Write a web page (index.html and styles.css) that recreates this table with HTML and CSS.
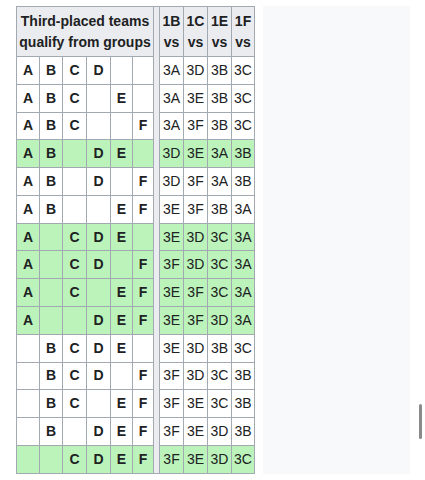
FILE: index.html
```html
<!DOCTYPE html>
<html>
<head>
<meta charset="utf-8">
<link rel="stylesheet" href="styles.css">
</head>
<body>
<div class="page">
  <table class="wikitable">
    <colgroup>
      <col class="c-l1"><col class="c-l2"><col class="c-l3"><col class="c-l4"><col class="c-l5"><col class="c-l6">
      <col class="c-sep">
      <col class="c-r1"><col class="c-r2"><col class="c-r3"><col class="c-r4">
    </colgroup>
    <tbody>
      <tr class="head">
        <th colspan="6" class="head-groups">Third-placed teams qualify from groups</th>
        <th rowspan="16" class="sep"></th>
        <th class="head-vs">1B<br>vs</th>
        <th class="head-vs">1C<br>vs</th>
        <th class="head-vs">1E<br>vs</th>
        <th class="head-vs">1F<br>vs</th>
      </tr>
      <tr><td class="g">A</td><td class="g">B</td><td class="g">C</td><td class="g">D</td><td class="g"></td><td class="g"></td><td>3A</td><td>3D</td><td>3B</td><td>3C</td></tr>
      <tr><td class="g">A</td><td class="g">B</td><td class="g">C</td><td class="g"></td><td class="g">E</td><td class="g"></td><td>3A</td><td>3E</td><td>3B</td><td>3C</td></tr>
      <tr><td class="g">A</td><td class="g">B</td><td class="g">C</td><td class="g"></td><td class="g"></td><td class="g">F</td><td>3A</td><td>3F</td><td>3B</td><td>3C</td></tr>
      <tr class="q"><td class="g">A</td><td class="g">B</td><td class="g"></td><td class="g">D</td><td class="g">E</td><td class="g"></td><td>3D</td><td>3E</td><td>3A</td><td>3B</td></tr>
      <tr><td class="g">A</td><td class="g">B</td><td class="g"></td><td class="g">D</td><td class="g"></td><td class="g">F</td><td>3D</td><td>3F</td><td>3A</td><td>3B</td></tr>
      <tr><td class="g">A</td><td class="g">B</td><td class="g"></td><td class="g"></td><td class="g">E</td><td class="g">F</td><td>3E</td><td>3F</td><td>3B</td><td>3A</td></tr>
      <tr class="q"><td class="g">A</td><td class="g"></td><td class="g">C</td><td class="g">D</td><td class="g">E</td><td class="g"></td><td>3E</td><td>3D</td><td>3C</td><td>3A</td></tr>
      <tr class="q"><td class="g">A</td><td class="g"></td><td class="g">C</td><td class="g">D</td><td class="g"></td><td class="g">F</td><td>3F</td><td>3D</td><td>3C</td><td>3A</td></tr>
      <tr class="q"><td class="g">A</td><td class="g"></td><td class="g">C</td><td class="g"></td><td class="g">E</td><td class="g">F</td><td>3E</td><td>3F</td><td>3C</td><td>3A</td></tr>
      <tr class="q"><td class="g">A</td><td class="g"></td><td class="g"></td><td class="g">D</td><td class="g">E</td><td class="g">F</td><td>3E</td><td>3F</td><td>3D</td><td>3A</td></tr>
      <tr><td class="g"></td><td class="g">B</td><td class="g">C</td><td class="g">D</td><td class="g">E</td><td class="g"></td><td>3E</td><td>3D</td><td>3B</td><td>3C</td></tr>
      <tr><td class="g"></td><td class="g">B</td><td class="g">C</td><td class="g">D</td><td class="g"></td><td class="g">F</td><td>3F</td><td>3D</td><td>3C</td><td>3B</td></tr>
      <tr><td class="g"></td><td class="g">B</td><td class="g">C</td><td class="g"></td><td class="g">E</td><td class="g">F</td><td>3F</td><td>3E</td><td>3C</td><td>3B</td></tr>
      <tr><td class="g"></td><td class="g">B</td><td class="g"></td><td class="g">D</td><td class="g">E</td><td class="g">F</td><td>3F</td><td>3E</td><td>3D</td><td>3B</td></tr>
      <tr class="q"><td class="g"></td><td class="g"></td><td class="g">C</td><td class="g">D</td><td class="g">E</td><td class="g">F</td><td>3F</td><td>3E</td><td>3D</td><td>3C</td></tr>
    </tbody>
  </table>
  <div class="side-panel"></div>
</div>
<div class="scroll-indicator"></div>
</body>
</html>
```

FILE: styles.css
```css
html, body {
  margin: 0;
  padding: 0;
  background: #ffffff;
}

body {
  font-family: "Liberation Sans", Arial, sans-serif;
  color: #202122;
  font-size: 14px;
}

.page {
  display: flex;
  align-items: stretch;
  gap: 8px;
  padding: 6px 0 0 16px;
}

.wikitable {
  border-collapse: collapse;
  table-layout: fixed;
  width: 238px;
  border: 1px solid #a2a9b1;
  background: #ffffff;
  flex: none;
}

.c-l1 { width: 23px; }
.c-l2 { width: 23px; }
.c-l3 { width: 24px; }
.c-l4 { width: 24px; }
.c-l5 { width: 22px; }
.c-l6 { width: 21px; }
.c-sep { width: 6px; }
.c-r1 { width: 24px; }
.c-r2 { width: 24px; }
.c-r3 { width: 24px; }
.c-r4 { width: 23px; }

.wikitable th,
.wikitable td {
  border: 1px solid #a2a9b1;
  padding: 2.9px 0;
  line-height: 21px;
  text-align: center;
  white-space: nowrap;
}

.wikitable th {
  background: #eaecf0;
  font-weight: bold;
}

.wikitable tr.head th {
  padding-top: 3.5px;
  padding-bottom: 3.5px;
}

.wikitable th.head-groups {
  white-space: normal;
  padding-left: 2px;
  padding-right: 2px;
}

.wikitable th.sep {
  padding: 0;
  background: #eaecf0;
}

.wikitable td.g {
  font-weight: bold;
}

.wikitable tr.q td {
  background: #bbf3bb;
}

.side-panel {
  width: 147px;
  background: #f8f9fa;
  flex: none;
}

.scroll-indicator {
  position: absolute;
  left: 419px;
  top: 404px;
  width: 3px;
  height: 35px;
  border-radius: 2px;
  background: #8a8a8a;
}
```
